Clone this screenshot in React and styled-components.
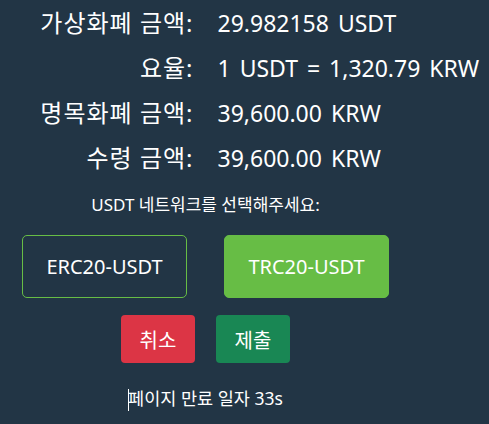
import React from 'react';
import styled, { createGlobalStyle } from 'styled-components';

const GlobalStyle = createGlobalStyle`
  html, body {
    margin: 0;
    padding: 0;
    background: #223545;
  }
  body {
    font-family: "Noto Sans", "Noto Sans CJK KR", sans-serif;
    color: #ffffff;
  }
`;

const Page = styled.div`
  width: 411px;
  min-height: 424px;
  display: flex;
  flex-direction: column;
  align-items: center;
  padding-top: 7px;
  box-sizing: border-box;
`;

const InfoGrid = styled.div`
  width: 100%;
  display: grid;
  grid-template-columns: minmax(0, 1fr) minmax(0, 1fr);
  column-gap: 24px;
  row-gap: 13px;
`;

const Label = styled.div`
  text-align: right;
  font-size: 24px;
  letter-spacing: 1px;
  line-height: 32px;
  white-space: nowrap;
`;

const Value = styled.div`
  font-size: 23px;
  word-spacing: 3px;
  line-height: 32px;
  white-space: nowrap;
`;

const Prompt = styled.div`
  margin-top: 20px;
  font-size: 17px;
  line-height: 22px;
`;

const NetworkRow = styled.div`
  display: flex;
  gap: 37px;
  margin-top: 19px;
`;

const NetworkButton = styled.button`
  width: 165px;
  height: 63px;
  border-radius: 5px;
  border: 1px solid #67bd45;
  background: ${(p) => (p.$active ? '#67bd45' : 'transparent')};
  color: #ffffff;
  font-family: inherit;
  font-size: 20px;
  cursor: pointer;
`;

const ActionRow = styled.div`
  display: flex;
  gap: 21px;
  margin-top: 17px;
`;

const ActionButton = styled.button`
  width: 74px;
  height: 48px;
  border: none;
  border-radius: 4px;
  background: ${(p) => p.$bg};
  color: #ffffff;
  font-family: inherit;
  font-size: 20px;
  cursor: pointer;
`;

const Expiry = styled.div`
  margin-top: 23px;
  font-size: 17.5px;
  line-height: 24px;
`;

const Caret = styled.span`
  display: inline-block;
  width: 1px;
  height: 22px;
  background: #ffffff;
  vertical-align: middle;
  margin-right: -1px;
`;

const rows = [
  ['가상화폐 금액:', '29.982158 USDT'],
  ['요율:', '1 USDT = 1,320.79 KRW'],
  ['명목화폐 금액:', '39,600.00 KRW'],
  ['수령 금액:', '39,600.00 KRW'],
];

export default function App() {
  const [network, setNetwork] = React.useState('TRC20');

  return (
    <>
      <GlobalStyle />
      <Page>
        <InfoGrid>
          {rows.map(([label, value]) => (
            <React.Fragment key={label}>
              <Label>{label}</Label>
              <Value>{value}</Value>
            </React.Fragment>
          ))}
        </InfoGrid>

        <Prompt>USDT 네트워크를 선택해주세요:</Prompt>

        <NetworkRow>
          <NetworkButton $active={network === 'ERC20'} onClick={() => setNetwork('ERC20')}>
            ERC20-USDT
          </NetworkButton>
          <NetworkButton $active={network === 'TRC20'} onClick={() => setNetwork('TRC20')}>
            TRC20-USDT
          </NetworkButton>
        </NetworkRow>

        <ActionRow>
          <ActionButton $bg="#dc3545">취소</ActionButton>
          <ActionButton $bg="#198754">제출</ActionButton>
        </ActionRow>

        <Expiry>
          <Caret />페이지 만료 일자 33s
        </Expiry>
      </Page>
    </>
  );
}
